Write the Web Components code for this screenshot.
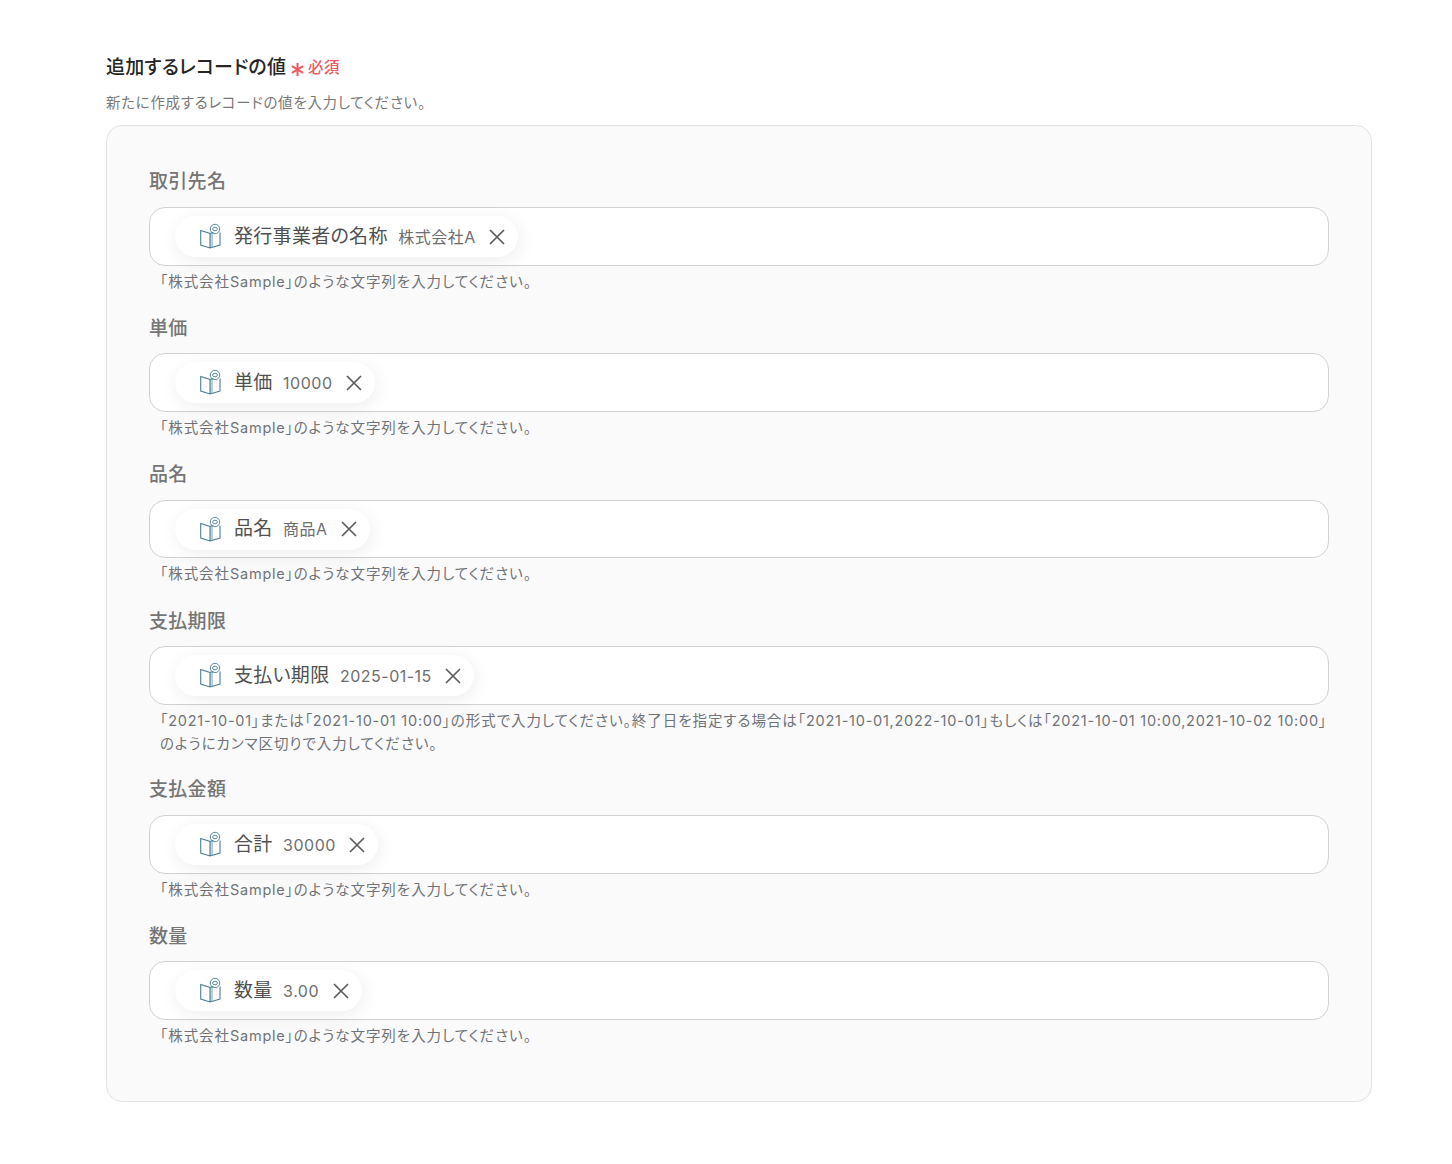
<!DOCTYPE html>
<html lang="ja"><head><meta charset="utf-8">
<style>
html,body{margin:0;background:#fff}
body{font-family:Inter,"Noto Sans CJK JP",sans-serif;color:#2a2a2a;font-feature-settings:"palt"}
</style></head><body>
<form-page></form-page>
<template id="page-t"><style>
:host{display:block;padding:55.5px 80px 62px 106px}
.title{display:flex;align-items:center;height:24px;font-size:19px;letter-spacing:.2px;font-weight:500;line-height:24px;color:#262626}
.ast{width:13px;height:13px;margin:3px 4px 0 5px;display:block}
.req{font-size:15.500px;font-weight:500;letter-spacing:.5px;color:#ec5a63;line-height:24px}
.sub{font-size:14.500px;letter-spacing:.7px;line-height:20px;color:#797979;margin-top:13.5px;margin-bottom:12px}
.panel{box-sizing:border-box;width:1266px;height:977px;border:1px solid #e3e3e3;border-radius:16px;background:#fafafa;padding:43px 42px 0;display:flex;flex-direction:column}
</style>
<div class="title"><span>追加するレコードの値</span><svg class="ast" viewBox="0 0 13 13"><path d="M6.5 0v13M.8 3.2l11.4 6.6M12.2 3.2L.8 9.8" stroke="#ec5a63" stroke-width="2" fill="none"/></svg><span class="req">必須</span></div>
<div class="sub">新たに作成するレコードの値を入力してください。</div>
<div class="panel"><slot></slot></div>
</template>
<template id="field-t"><style>
:host{display:block;height:146.4px}
:host([tall]){height:168.9px}
.label{font-size:19px;font-weight:500;letter-spacing:.3px;line-height:24px;color:#757575;height:24px;margin-bottom:14px;position:relative;top:1.4px}
.box{box-sizing:border-box;height:58.6px;width:1180px;border:1px solid #d2d2d4;border-radius:16px;background:#fff;padding:8px 25px;display:flex;align-items:flex-start}
.hint{font-size:14.500px;letter-spacing:.95px;line-height:23px;color:#6f7378;padding:4px 0 0 11px;width:1175px}
</style>
<div class="label"><slot name="label"></slot></div>
<div class="box"><slot></slot></div>
<div class="hint"><slot name="hint"></slot></div>
</template>
<template id="chip-t"><style>
:host{display:inline-flex;align-items:center;height:41px;box-sizing:border-box;border-radius:21px;background:#fff;box-shadow:2px 4px 18px rgba(0,0,0,.07);padding:0 13px 0 23px}
svg.b{width:24px;height:26px;display:block;margin-top:-1px}
.n{font-size:19px;letter-spacing:.3px;color:#505050;margin-left:12px;line-height:24px}
.v{font-size:16px;letter-spacing:.5px;color:#6e6e6e;margin-left:10.5px;line-height:24px}
svg.x{width:16px;height:16px;margin-left:13.5px;display:block}
</style>
<svg class="b" viewBox="0 0 24 26" fill="none"><path d="M12 10.500L15 9.500V24L12 24.800Z" fill="#b7d0dc"/><path d="M12 25V10.500L2.700 7.500V22l9.300 3 10-3V9.500M12 10.500l3.500-1.200" stroke="#4f7f96" stroke-width="1.100"/><circle cx="17" cy="6" r="4.700" stroke="#5a8aa0" stroke-width="1"/><ellipse cx="17" cy="6" rx="2.400" ry="1.800" stroke="#5a8aa0" stroke-width="1"/></svg>
<span class="n"><slot name="name"></slot></span><span class="v"><slot name="value"></slot></span>
<svg class="x" viewBox="0 0 16 16"><path d="M1 1l14 14M15 1L1 15" stroke="#5c5c5c" stroke-width="1.700" fill="none"/></svg>
</template>
<script>
function def(name,tid){customElements.define(name,class extends HTMLElement{constructor(){super();this.attachShadow({mode:'open'}).appendChild(document.getElementById(tid).content.cloneNode(true))}})}
def('form-page','page-t');def('form-field','field-t');def('var-chip','chip-t');
const H='「株式会社Sample」のような文字列を入力してください。';
const L='「2021-10-01」または「2021-10-01 10:00」の形式で入力してください。終了日を指定する場合は「2021-10-01,2022-10-01」もしくは「2021-10-01 10:00,2021-10-02 10:00」のようにカンマ区切りで入力してください。';
const data=[['取引先名','発行事業者の名称','株式会社A',H],['単価','単価','10000',H],['品名','品名','商品A',H],['支払期限','支払い期限','2025-01-15',L],['支払金額','合計','30000',H],['数量','数量','3.00',H]];
const page=document.querySelector('form-page');
function rich(h){const w=document.createElement('span');w.slot='hint';
for(const r of h.match(/[「」。]|[A-Za-z0-9:, \-]+|[^「」。A-Za-z0-9:, \-]+/g)){const e=document.createElement('span');e.textContent=r;
if(/^[A-Za-z0-9:, \-]/.test(r))e.style.letterSpacing='.75px';w.appendChild(e)}return w}
for(const[d,n,v,h]of data){const f=document.createElement('form-field');if(h===L)f.setAttribute('tall','');
const s=(t,sl,x)=>{const e=document.createElement('span');e.slot=sl;e.textContent=x;t.appendChild(e)};
s(f,'label',d);const c=document.createElement('var-chip');s(c,'name',n);s(c,'value',v);f.appendChild(c);f.appendChild(rich(h));page.appendChild(f)}
</script>
</body></html>
